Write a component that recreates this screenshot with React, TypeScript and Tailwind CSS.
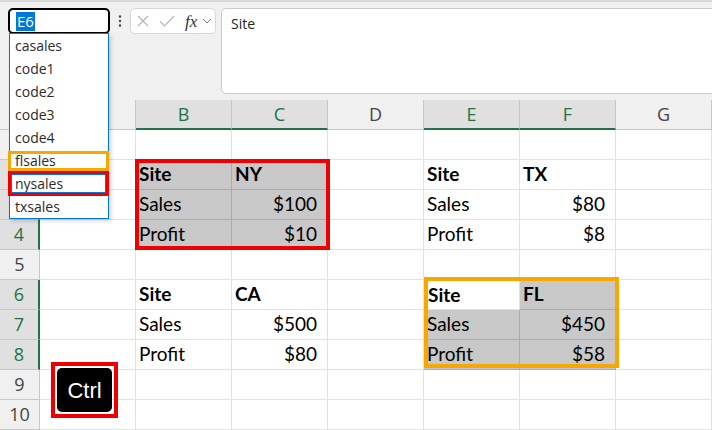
import React from "react";

const COLS = ["A", "B", "C", "D", "E", "F", "G"];
const HL_COLS = new Set(["B", "C", "E", "F"]);
const HL_ROWS = new Set([2, 3, 4, 6, 7, 8]);
const ROWS = [1, 2, 3, 4, 5, 6, 7, 8, 9, 10];

type Cell = { t: string; bold?: boolean; right?: boolean };

const DATA: Record<string, Cell> = {
  B2: { t: "Site", bold: true },
  C2: { t: "NY", bold: true },
  B3: { t: "Sales" },
  C3: { t: "$100", right: true },
  B4: { t: "Profit" },
  C4: { t: "$10", right: true },
  E2: { t: "Site", bold: true },
  F2: { t: "TX", bold: true },
  E3: { t: "Sales" },
  F3: { t: "$80", right: true },
  E4: { t: "Profit" },
  F4: { t: "$8", right: true },
  B6: { t: "Site", bold: true },
  C6: { t: "CA", bold: true },
  B7: { t: "Sales" },
  C7: { t: "$500", right: true },
  B8: { t: "Profit" },
  C8: { t: "$80", right: true },
  E6: { t: "Site", bold: true },
  F6: { t: "FL", bold: true },
  E7: { t: "Sales" },
  F7: { t: "$450", right: true },
  E8: { t: "Profit" },
  F8: { t: "$58", right: true },
};

// selected (gray) cells
const SHADED = new Set(["B2", "C2", "B3", "C3", "B4", "C4", "F6", "E7", "F7", "E8", "F8"]);

const NAMES = ["casales", "code1", "code2", "code3", "code4", "flsales", "nysales", "txsales"];

const uiFont = { fontFamily: '"Open Sans", "Noto Sans", sans-serif' };

function FormulaBar() {
  return (
    <div className="h-[100px] bg-[#f0f0f0] border-t-2 border-[#d8d8d8] flex items-start pt-[6px] overflow-hidden">
      {/* name box */}
      <div className="ml-[8px] w-[102px] shrink-0 h-[26px] bg-white border-2 border-black rounded-[5px] flex items-center" style={uiFont}>
        <span className="ml-[6px] bg-[#0078d7] text-white text-[15px] leading-[19px] px-[1px]">E6</span>
      </div>

      {/* dots */}
      <div className="w-[20px] shrink-0 h-[26px] flex items-center justify-center">
        <svg width="4" height="12" viewBox="0 0 4 12">
          <circle cx="2" cy="1.5" r="1.2" fill="#444" />
          <circle cx="2" cy="6" r="1.2" fill="#444" />
          <circle cx="2" cy="10.5" r="1.2" fill="#444" />
        </svg>
      </div>

      {/* cancel / enter / fx */}
      <div className="w-[86px] shrink-0 h-[26px] bg-white border border-[#d6d6d6] rounded-[5px] flex items-center">
        <svg className="ml-[6px]" width="12" height="12" viewBox="0 0 12 12">
          <path d="M1 1 L11 11 M11 1 L1 11" stroke="#b4b4b4" strokeWidth="1.1" fill="none" />
        </svg>
        <svg className="ml-[10px]" width="16" height="12" viewBox="0 0 16 12">
          <path d="M1 6.5 L5.5 11 L15 1" stroke="#b4b4b4" strokeWidth="1.1" fill="none" />
        </svg>
        <span className="ml-[10px] text-[17px] italic text-[#333] leading-none" style={{ fontFamily: '"Liberation Serif", serif' }}>
          fx
        </span>
        <svg className="ml-[5px]" width="10" height="6" viewBox="0 0 10 6">
          <path d="M1 1 L5 5 L9 1" stroke="#777" strokeWidth="1" fill="none" />
        </svg>
      </div>

      {/* formula input */}
      <div className="ml-[5px] w-[520px] shrink-0 h-[86px] bg-white border border-[#cacaca] rounded-[5px] pl-[9px] pt-[4px] text-[14px] text-[#222]" style={uiFont}>
        Site
      </div>
    </div>
  );
}

function HeaderRow() {
  return (
    <div className="flex h-[30px]" style={uiFont}>
      <div className="w-[40px] shrink-0 bg-[#f0f0f0] border-r border-b border-[#c8c8c8]" />
      {COLS.map((c) => {
        const hl = HL_COLS.has(c);
        return (
          <div
            key={c}
            className={
              hl
                ? "w-[96px] shrink-0 flex items-center justify-center bg-[#e0e0e0] text-[#217346] border-r border-r-[#c6c6c6] border-b-2 border-b-[#217346] text-[18px]"
                : "w-[96px] shrink-0 flex items-center justify-center bg-[#f0f0f0] text-[#444] border-r border-r-[#c6c6c6] border-b border-b-[#c6c6c6] text-[18px]"
            }
          >
            {c}
          </div>
        );
      })}
    </div>
  );
}

function Grid() {
  return (
    <div className="grid grid-cols-[40px_repeat(7,96px)] auto-rows-[30px]">
      {ROWS.map((r) => (
        <React.Fragment key={r}>
          <div
            className={
              HL_ROWS.has(r)
                ? "flex items-center justify-center bg-[#e0e0e0] text-[#217346] border-b border-b-[#c8c8c8] border-r-2 border-r-[#217346] text-[18px]"
                : "flex items-center justify-center bg-[#f0f0f0] text-[#444] border-b border-b-[#c8c8c8] border-r border-r-[#c8c8c8] text-[18px]"
            }
            style={uiFont}
          >
            {r}
          </div>
          {COLS.map((c) => {
            const id = c + r;
            const cell = DATA[id];
            const shaded = SHADED.has(id);
            const active = id === "E6";
            let cls = "flex items-center text-[19px] text-black border-r border-b ";
            cls += shaded ? "bg-[#c8c8c8] border-[#ababab] " : "bg-white border-[#e1e1e1] ";
            if (active) cls += "border border-[#1e6b41] ";
            cls += cell?.right ? "justify-end pr-[10px] " : "pl-[3px] ";
            if (cell?.bold) cls += "font-bold ";
            return (
              <div key={id} className={cls} style={{ fontFamily: 'Lato, "Open Sans", sans-serif' }}>
                {cell?.t}
              </div>
            );
          })}
        </React.Fragment>
      ))}
    </div>
  );
}

export default function App() {
  return (
    <div className="relative w-[712px] h-[430px] overflow-hidden bg-white">
      <FormulaBar />
      <HeaderRow />
      <Grid />

      {/* named range dropdown */}
      <div className="absolute left-[9px] top-[33px] w-[100px] bg-white border border-[#0078d4] shadow-[2px_2px_4px_rgba(0,0,0,0.18)]" style={uiFont}>
        {NAMES.map((n) => (
          <div key={n} className="h-[23px] pl-[5px] flex items-center text-[14px] text-[#2b2b2b]">
            {n}
          </div>
        ))}
      </div>

      {/* highlight boxes in list */}
      <div className="absolute left-[8px] top-[151px] w-[101px] h-[20px] border-[3px] border-[#f6a800]" />
      <div className="absolute left-[8px] top-[171px] w-[101px] h-[25px] border-[3px] border-[#ee0000]">
        <div className="w-full h-full border border-[#0078d4]" />
      </div>

      {/* range outlines */}
      <div className="absolute left-[135px] top-[159px] w-[195px] h-[91px] border-4 border-[#ee0000]" />
      <div className="absolute left-[424px] top-[277px] w-[195px] h-[91px] border-4 border-[#f6a800]" />

      {/* Ctrl key */}
      <div className="absolute left-[51px] top-[362px] w-[67px] h-[56px] border-4 border-[#ee0000] p-[2px]">
        <div className="w-full h-full bg-black rounded-[5px] flex items-center justify-center text-white text-[22px]" style={{ fontFamily: '"Liberation Sans", sans-serif' }}>
          Ctrl
        </div>
      </div>
    </div>
  );
}
